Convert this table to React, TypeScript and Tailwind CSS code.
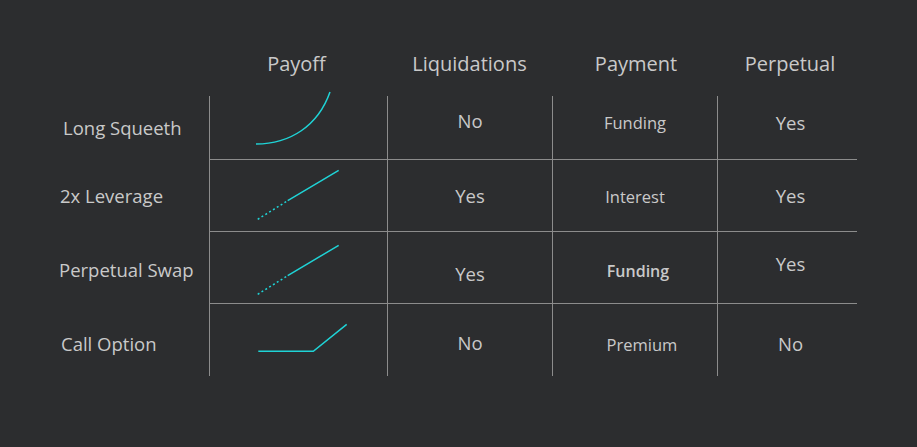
import React from "react";

const CYAN = "#1fd3d6";

type Row = {
    label: string;
    labelPad: string;
    chart: React.ReactNode;
    h: string;
    border: boolean;
    cells: { text: string; pad: string; bold?: boolean; size: string }[];
};

const rows: Row[] = [
    {
        label: "Long Squeeth",
        labelPad: "pt-[22px] pl-[4px]",
        h: "h-[64px]",
        border: true,
        chart: (
            <path d="M46 48 C 80 48, 108 30, 120 -4" fill="none" stroke={CYAN} strokeWidth="1.5" />
        ),
        cells: [
            { text: "No", pad: "pt-[15px]", size: "text-[18.5px]" },
            { text: "Funding", pad: "pt-[17px]", size: "text-[16.5px]" },
            { text: "Yes", pad: "pt-[17px]", size: "text-[18.5px]" },
        ],
    },
    {
        label: "2x Leverage",
        labelPad: "pt-[26px] pl-[1px]",
        h: "h-[72px]",
        border: true,
        chart: (
            <>
                <path d="M47.7 59.3 L77.7 40.7" fill="none" stroke={CYAN} strokeWidth="1.5" strokeDasharray="2 2.5" />
                <path d="M77.7 40.7 L128.7 10.3" fill="none" stroke={CYAN} strokeWidth="1.5" />
            </>
        ),
        cells: [
            { text: "Yes", pad: "pt-[26px]", size: "text-[18.5px]" },
            { text: "Interest", pad: "pt-[27px]", size: "text-[16.5px]" },
            { text: "Yes", pad: "pt-[26px]", size: "text-[18.5px]" },
        ],
    },
    {
        label: "Perpetual Swap",
        labelPad: "pt-[28px] pl-0",
        h: "h-[72px]",
        border: true,
        chart: (
            <>
                <path d="M47.7 62.3 L77.7 43.7" fill="none" stroke={CYAN} strokeWidth="1.5" strokeDasharray="2 2.5" />
                <path d="M77.7 43.7 L128.7 13.3" fill="none" stroke={CYAN} strokeWidth="1.5" />
            </>
        ),
        cells: [
            { text: "Yes", pad: "pt-[32px]", size: "text-[18.5px]" },
            { text: "Funding", pad: "pt-[29px] pl-[6px]", bold: true, size: "text-[16px]" },
            { text: "Yes", pad: "pt-[22px]", size: "text-[18.5px]" },
        ],
    },
    {
        label: "Call Option",
        labelPad: "pt-[30px] pl-[2px]",
        h: "h-[72px]",
        border: false,
        chart: (
            <path d="M48.3 47.3 L103.3 47.3 L136.7 20.3" fill="none" stroke={CYAN} strokeWidth="1.5" />
        ),
        cells: [
            { text: "No", pad: "pt-[29px]", size: "text-[18.5px]" },
            { text: "Premium", pad: "pt-[31px] pl-[14px]", size: "text-[16.5px]" },
            { text: "No", pad: "pt-[30px]", size: "text-[18.5px]" },
        ],
    },
];

const colW = ["w-[165px]", "w-[165px]", "w-[140px] pl-[6px]"];

export default function App() {
    return (
        <div
            className="w-full h-[447px] bg-[#2c2d2f] text-[#c9c9c9] font-medium pl-[59px] pt-[52px]"
            style={{ fontFamily: '"Open Sans", "Noto Sans", sans-serif' }}
        >
            {/* header */}
            <div className="flex h-[44px] text-[20px] leading-[24px]">
                <div className="w-[150px]" />
                <div className="w-[178px] text-center pr-[3px]">Payoff</div>
                <div className="w-[165px] text-center">Liquidations</div>
                <div className="w-[165px] text-center pl-[3px]">Payment</div>
                <div className="w-[140px] text-center pl-[6px]">Perpetual</div>
            </div>

            {/* body */}
            <div className="flex flex-col">
                {rows.map((row) => (
                    <div key={row.label} className={`flex ${row.h}`}>
                        <div className={`w-[150px] text-[18.5px] leading-[20px] ${row.labelPad}`}>
                            {row.label}
                        </div>
                        <div
                            className={`w-[178px] border-l border-[#8c8c8c] ${row.border ? "border-b" : ""}`}
                        >
                            <svg width="177" height="71" className="overflow-visible block">
                                {row.chart}
                            </svg>
                        </div>
                        {row.cells.map((c, i) => (
                            <div
                                key={i}
                                className={`${colW[i]} border-l border-[#8c8c8c] ${row.border ? "border-b" : ""} text-center leading-[20px] ${c.size} ${c.pad} ${c.bold ? "font-semibold" : ""}`}
                            >
                                {c.text}
                            </div>
                        ))}
                    </div>
                ))}
            </div>
        </div>
    );
}
